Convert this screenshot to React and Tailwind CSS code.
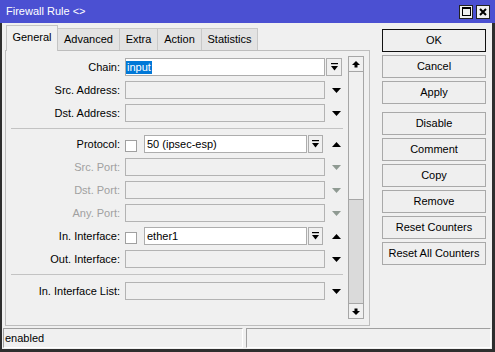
import React from "react";

const font = { fontFamily: '"Liberation Sans", Arial, sans-serif' };

function TriDown({ gray }) {
  return (
    <svg width="9" height="5" viewBox="0 0 9 5">
      <polygon points="0,0 9,0 4.5,5" fill={gray ? "#8f9a92" : "#000"} />
    </svg>
  );
}
function TriUp() {
  return (
    <svg width="9" height="5" viewBox="0 0 9 5">
      <polygon points="0,5 9,5 4.5,0" fill="#000" />
    </svg>
  );
}
function DropBtnIcon() {
  return (
    <svg width="7" height="8" viewBox="0 0 7 8">
      <rect x="0" y="0" width="7" height="1.2" fill="#000" />
      <polygon points="0,3 7,3 3.5,7.5" fill="#000" />
    </svg>
  );
}
function ScrollArrow({ up }) {
  return (
    <svg width="8" height="7" viewBox="0 0 8 7">
      {up ? (
        <polygon points="4,0 8,4 5.5,4 5.5,6.5 2.5,6.5 2.5,4 0,4" fill="#000" />
      ) : (
        <polygon points="4,7 8,3 5.5,3 5.5,0.5 2.5,0.5 2.5,3 0,3" fill="#000" />
      )}
    </svg>
  );
}

function Label({ children, gray }) {
  return (
    <div
      className={`w-[114px] shrink-0 text-right leading-[18px] ${
        gray ? "text-[#a0a0a0]" : "text-black"
      }`}
    >
      {children}
    </div>
  );
}

function DropBtn() {
  return (
    <div className="h-[18px] w-[16px] shrink-0 border border-[#adadad] bg-[#f0f0f0] flex items-center justify-center">
      <DropBtnIcon />
    </div>
  );
}

function ArrowRow({ label, gray }) {
  return (
    <div className="flex h-[18px] items-center">
      <Label gray={gray}>{label}</Label>
      <div className="ml-[5px] h-[18px] w-[200px] shrink-0 border border-[#b3b3b3] bg-[#f0f0f0]" />
      <div className="ml-[7px] flex items-center">
        <TriDown gray={gray} />
      </div>
    </div>
  );
}

function CheckRow({ label, value }) {
  return (
    <div className="flex h-[18px] items-center">
      <Label>{label}</Label>
      <div className="ml-[5px] mt-[3px] h-[12px] w-[12px] shrink-0 border border-[#a0a0a0] bg-white" />
      <div className="ml-[7px] h-[18px] w-[163px] shrink-0 border border-[#adadad] bg-white pl-[2px] leading-[16px] text-black">
        {value}
      </div>
      <div className="ml-[1px] h-[18px] w-[15px] shrink-0 border border-[#adadad] bg-[#f0f0f0] flex items-center justify-center">
        <DropBtnIcon />
      </div>
      <div className="ml-[9px] flex items-center">
        <TriUp />
      </div>
    </div>
  );
}

function Sep() {
  return <div className="ml-[5px] h-px w-[332px] bg-[#c3c3c3]" />;
}

function Btn({ children, def }) {
  return (
    <div
      className={`flex h-[23px] w-[104px] items-center justify-center bg-[#efefef] text-black border ${
        def ? "border-[#111]" : "border-[#a9a9a9]"
      }`}
    >
      {children}
    </div>
  );
}

export default function App() {
  const tabs = [
    ["Advanced", "w-[62px]"],
    ["Extra", "w-[38px]"],
    ["Action", "w-[44px]"],
    ["Statistics", "w-[56px]"],
  ];
  return (
    <div
      className="flex h-[352px] w-[495px] flex-col overflow-hidden bg-[#f0f0f0] text-[11px]"
      style={font}
    >
      {/* title bar */}
      <div className="flex h-[23px] shrink-0 items-center bg-[#4b50d2] pl-[6px] pr-[5px] text-[11px] text-white">
        <div className="flex-1">Firewall Rule &lt;&gt;</div>
        <div className="flex gap-[3px]">
          <div className="flex h-[14px] w-[14px] items-center justify-center border border-[#222] bg-[#f0f0f0]">
            <div className="h-[9px] w-[9px] border border-black border-t-2" />
          </div>
          <div className="flex h-[14px] w-[14px] items-center justify-center border border-[#222] bg-[#f0f0f0]">
            <svg width="8" height="8" viewBox="0 0 8 8">
              <path d="M1 1 L7 7 M7 1 L1 7" stroke="#000" strokeWidth="2" />
            </svg>
          </div>
        </div>
      </div>

      {/* body */}
      <div className="flex flex-1 flex-col border-b-[3px] border-l-2 border-r-[3px] border-[#2e2e2e]">
        <div className="flex h-[303px]">
          {/* left */}
          <div className="flex flex-col pl-[3px]">
            <div className="flex h-[27px] items-end pl-[1px]">
              <div className="relative z-10 -mb-px flex h-[26px] w-[52px] items-center justify-center border-l border-r border-t border-[#c4c4c4] bg-[#f0f0f0] pb-[2px] text-black">
                General
              </div>
              {tabs.map(([t, w]) => (
                <div
                  key={t}
                  className={`flex h-[22px] ${w} items-center justify-center border-r border-t border-[#c8c8c8] bg-[#e3e3e3] text-black`}
                >
                  {t}
                </div>
              ))}
            </div>
            <div className="flex h-[276px] w-[365px] border border-[#bdbdbd]">
              {/* form */}
              <div className="flex w-[342px] flex-col pt-[7px]">
                <div className="flex flex-col gap-[5px]">
                  <div className="flex h-[18px] items-center">
                    <Label>Chain:</Label>
                    <div className="ml-[5px] flex h-[18px] w-[200px] shrink-0 items-center border border-[#adadad] bg-white">
                      <span className="bg-[#0078d7] px-[1px] leading-[13px] text-white">input</span>
                    </div>
                    <div className="ml-px">
                      <DropBtn />
                    </div>
                  </div>
                  <ArrowRow label="Src. Address:" />
                  <ArrowRow label="Dst. Address:" />
                </div>
                <div className="mb-[6px] mt-[6px]">
                  <Sep />
                </div>
                <div className="flex flex-col gap-[5px]">
                  <CheckRow label="Protocol:" value="50 (ipsec-esp)" />
                  <ArrowRow label="Src. Port:" gray />
                  <ArrowRow label="Dst. Port:" gray />
                  <ArrowRow label="Any. Port:" gray />
                  <CheckRow label="In. Interface:" value="ether1" />
                  <ArrowRow label="Out. Interface:" />
                </div>
                <div className="mb-[7px] mt-[6px]">
                  <Sep />
                </div>
                <ArrowRow label="In. Interface List:" />
              </div>
              {/* scrollbar */}
              <div className="pt-[5px]">
                <div className="flex h-[263px] w-[16px] flex-col border border-[#a6a6a6] bg-[#dadada]">
                  <div className="flex h-[15px] items-center justify-center border-b border-[#a6a6a6] bg-[#f0f0f0]">
                    <ScrollArrow up />
                  </div>
                  <div className="h-[128px] border-b border-[#a6a6a6] bg-[#f0f0f0]" />
                  <div className="flex-1" />
                  <div className="flex h-[15px] items-center justify-center border-t border-[#a6a6a6] bg-[#f0f0f0]">
                    <ScrollArrow />
                  </div>
                </div>
              </div>
            </div>
          </div>

          {/* right buttons */}
          <div className="ml-[12px] flex flex-col pt-[6px]">
            <div className="flex flex-col gap-[3px]">
              <Btn def>OK</Btn>
              <Btn>Cancel</Btn>
              <Btn>Apply</Btn>
            </div>
            <div className="mt-[8px] flex flex-col gap-[3px]">
              <Btn>Disable</Btn>
              <Btn>Comment</Btn>
              <Btn>Copy</Btn>
              <Btn>Remove</Btn>
              <Btn>Reset Counters</Btn>
              <Btn>Reset All Counters</Btn>
            </div>
          </div>
        </div>

        {/* status bar */}
        <div className="flex h-[23px] gap-[3px] pl-px pt-[2px]">
          <div className="flex h-[20px] w-[240px] items-center border border-[#a0a0a0] border-b-white border-r-white pl-[1px] text-black">
            enabled
          </div>
          <div className="h-[20px] w-[245px] border border-[#a0a0a0] border-b-white border-r-white" />
        </div>
      </div>
    </div>
  );
}
